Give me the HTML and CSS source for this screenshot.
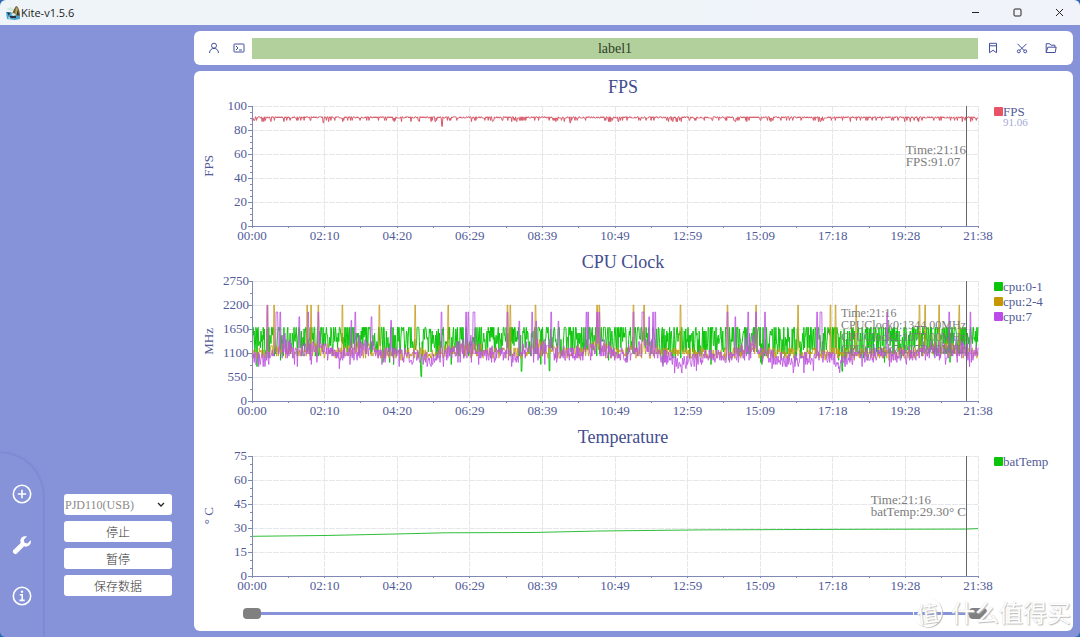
FILE: index.html
```html
<!DOCTYPE html>
<html lang="zh-CN">
<head>
<meta charset="utf-8">
<title>Kite-v1.5.6</title>
<link rel="stylesheet" href="styles.css">
</head>
<body>
<div class="window">
  <header class="titlebar">
    <svg class="app-icon" width="16" height="16" viewBox="0 0 16 16" aria-hidden="true">
      <path d="M1 4l5-2 3 3-3 1z" fill="#cfeadd"/>
      <path d="M7 11c0-4 2-7 4-10 2 0 4 4 4 11z" fill="#6f6438"/>
      <path d="M11 2l2 2-1 5-2 1z" fill="#b9a25a"/>
      <path d="M1 7h5l3 3 6 1v3l-5 1-8-1z" fill="#4aa3cc"/>
      <path d="M2 7l3 1-1 3zM5 11h6v2H5zM12 5l2 5h-2z" fill="#26323c"/>
      <path d="M6 9l3-1 2 2-3 1zM3 12l3 1-2 1z" fill="#e4eaec"/>
    </svg>
    <h1 class="app-name">Kite-v1.5.6</h1>
    <div class="window-buttons">
      <button class="window-button" aria-label="最小化"><svg width="9" height="9" viewBox="0 0 9 9"><path d="M1 4.500h7"/></svg></button>
      <button class="window-button" aria-label="最大化"><svg width="9" height="9" viewBox="0 0 9 9"><rect x="1" y="1" width="7" height="7" rx="1"/></svg></button>
      <button class="window-button" aria-label="关闭"><svg width="9" height="9" viewBox="0 0 9 9"><path d="M1 1l7 7M8 1l-7 7"/></svg></button>
    </div>
  </header>

  <div class="workspace">
    <aside class="sidebar">
      <nav class="rail">
        <button class="rail-button" aria-label="添加"><svg width="20" height="20" viewBox="0 0 20 20"><g fill="none" stroke="#fff" stroke-width="1.6"><circle cx="10" cy="10" r="8.700"/><path d="M10 5.800v8.400M5.800 10h8.400"/></g></svg></button>
        <button class="rail-button" aria-label="工具"><svg width="20" height="20" viewBox="0 0 20 20"><path fill="#fff" d="M18.700 5.200l-3.300 3.200-2.900-.7-.7-2.900 3.200-3.300c-2.200-.7-4.500-.1-5.700 1.500-1.100 1.500-1.200 3.300-.6 4.900L1.400 15.100c-.8.8-.8 2 0 2.800l.7.7c.8.8 2 .8 2.800 0l7.200-7.300c1.600.6 3.500.4 4.900-.7 1.600-1.300 2.300-3.400 1.700-5.400z"/></svg></button>
        <button class="rail-button" aria-label="信息"><svg width="20" height="20" viewBox="0 0 20 20"><g fill="none" stroke="#fff" stroke-width="1.600"><circle cx="10" cy="10" r="8.700"/><path d="M7.800 8.800h2.400v5.600M7.500 14.400h5.200"/></g><circle cx="10" cy="5.800" r="1.200" fill="#fff"/></svg></button>
      </nav>
      <div class="controls">
        <select class="control device" aria-label="设备"><option>PJD110(USB)</option></select>
        <button class="control">停止</button>
        <button class="control">暂停</button>
        <button class="control">保存数据</button>
      </div>
    </aside>

    <main class="content">
      <div class="toolbar">
        <button class="tool" aria-label="用户"><svg width="12" height="12" viewBox="0 0 12 12"><circle cx="6" cy="3.700" r="2.500"/><path d="M1.500 11c.2-3 2-4.600 4.500-4.600s4.300 1.600 4.500 4.600"/></svg></button>
        <button class="tool" aria-label="终端"><svg width="12" height="12" viewBox="0 0 12 12"><rect x="1" y="2" width="10" height="8" rx=".5"/><path d="M3 4l2 2-2 2M6 8h3"/></svg></button>
        <div class="scene">label1</div>
        <div class="tool-group">
          <button class="tool" aria-label="书签"><svg width="12" height="12" viewBox="0 0 12 12"><path d="M2.500 1.300h7v9.400L6 8.300l-3.500 2.400zM2.500 3.800h7"/></svg></button>
          <button class="tool" aria-label="剪切"><svg width="12" height="12" viewBox="0 0 12 12"><path d="M1.500 1.800l6.700 6.700M10.500 1.800L3.800 8.500"/><circle cx="2.800" cy="9.300" r="1.500"/><circle cx="9.200" cy="9.300" r="1.500"/></svg></button>
          <button class="tool" aria-label="打开文件夹"><svg width="12" height="12" viewBox="0 0 12 12"><path d="M1.200 10.500V1.700h3.500l1.200 1.500h4v2M1.200 10.500l1.600-5.300h8.400l-1 5.300z"/></svg></button>
        </div>
      </div>

      <div class="panel">
        <section class="chart" data-chart="fps">
          <h2 class="chart-title">FPS</h2>
          <div class="unit"><span>FPS</span></div>
          <div class="y-axis"></div>
          <div class="plot">
            <svg class="canvas" viewBox="0 0 726 120" preserveAspectRatio="none"></svg>
            <div class="cursor"></div>
            <div class="readout">Time:21:16<br>FPS:91.07</div>
          </div>
          <ul class="legend">
            <li><i class="swatch red"></i>FPS</li>
            <li class="average">91.06</li>
          </ul>
          <div class="x-axis"></div>
        </section>

        <section class="chart" data-chart="cpu">
          <h2 class="chart-title">CPU Clock</h2>
          <div class="unit"><span>MHz</span></div>
          <div class="y-axis"></div>
          <div class="plot">
            <svg class="canvas" viewBox="0 0 726 120" preserveAspectRatio="none"></svg>
            <div class="cursor"></div>
            <div class="readout dense">Time:21:16<br>CPUClock0:1344.00MHz<br>CPUClock2:1077.00MHz<br>CPUClock7:1075.00MHz</div>
          </div>
          <ul class="legend spaced">
            <li><i class="swatch green"></i>cpu:0-1</li>
            <li><i class="swatch gold"></i>cpu:2-4</li>
            <li><i class="swatch purple"></i>cpu:7</li>
          </ul>
          <div class="x-axis"></div>
        </section>

        <section class="chart" data-chart="temp">
          <h2 class="chart-title">Temperature</h2>
          <div class="unit"><span>° C</span></div>
          <div class="y-axis"></div>
          <div class="plot">
            <svg class="canvas" viewBox="0 0 726 120" preserveAspectRatio="none"></svg>
            <div class="cursor"></div>
            <div class="readout">Time:21:16<br>batTemp:29.30° C</div>
          </div>
          <ul class="legend">
            <li><i class="swatch green"></i>batTemp</li>
          </ul>
          <div class="x-axis"></div>
        </section>

        <div class="range">
          <input type="range" class="range-input" aria-label="开始时间" min="0" max="100" value="0">
          <input type="range" class="range-input" aria-label="结束时间" min="0" max="100" value="100">
        </div>
        <div class="watermark"><span class="watermark-badge">值</span><span>什么值得买</span></div>
      </div>
    </main>
  </div>
</div>
<script src="charts.js"></script>
</body>
</html>
```
FILE: styles.css
```css
* { box-sizing: border-box; }

body {
  margin: 0;
  background: #2a6db0;
  color: #525b98;
  font: 13px/12px "Liberation Serif", "Noto Sans CJK SC", serif;
}

h1, h2, ul { margin: 0; padding: 0; font-weight: normal; }
ul { list-style: none; }
button { border: 0; padding: 0; background: none; font: inherit; color: inherit; }

.window {
  display: flex;
  flex-direction: column;
  min-height: 100vh;
  overflow: hidden;
  border-radius: 6px;
  background: #8693d9;
}

.titlebar {
  display: flex;
  align-items: center;
  height: 25px;
  padding-left: 5px;
  background: linear-gradient(90deg, #eef4f8, #f0f4fa);
  color: #1c1c1c;
}
.app-name { font: 11px/16px "Open Sans", sans-serif; }
.window-buttons { display: flex; margin-left: auto; }
.window-button { display: grid; place-items: center; width: 42px; height: 25px; }
.window-button svg { fill: none; stroke: #222; stroke-width: 1; }

.workspace { display: flex; flex: 1; }

.sidebar { display: flex; align-items: flex-end; gap: 21px; width: 194px; flex: none; }
.rail {
  display: flex;
  flex-direction: column;
  align-items: center;
  gap: 31px;
  width: 43px;
  padding: 31px 0;
  border-radius: 0 43px 0 0;
  background: #8693d9;
  box-shadow: 0 0 3px #6a77be;
}
.rail-button { display: block; height: 20px; }
.rail-button svg { display: block; }
.controls { display: flex; flex-direction: column; gap: 6px; width: 108px; padding-bottom: 41px; }
.control {
  height: 21px;
  border: 0;
  border-radius: 3px;
  background: #fff;
  color: #333;
  font: 300 12px/20px "Noto Sans CJK SC", sans-serif;
  text-align: center;
}
.device {
  appearance: none;
  padding: 0 1px;
  color: #8a8a8a;
  font: 12px/20px "Liberation Serif", serif;
  text-align: left;
  background: #fff url("data:image/svg+xml,%3Csvg xmlns='http://www.w3.org/2000/svg' width='8' height='6' fill='none' stroke='%23222' stroke-width='1.300'%3E%3Cpath d='M1 1l3 3 3-3'/%3E%3C/svg%3E") no-repeat right 7px center;
}

.content { display: flex; flex-direction: column; flex: 1; gap: 6px; min-width: 0; padding: 6px 7px 6px 0; }

.toolbar { display: flex; align-items: center; height: 34px; padding: 0 16px 0 14px; border-radius: 6px; background: #fff; }
.tool { display: grid; place-items: center; width: 12px; height: 12px; margin-right: 13px; }
.tool + .scene { margin-left: -6px; }
.tool svg { fill: none; stroke: #454f9e; stroke-width: 1; }
.scene { flex: 1; height: 21px; background: #b2d09b; color: #30402a; font-size: 14px; line-height: 21px; text-align: center; }
.tool-group { display: flex; justify-content: space-between; width: 79px; padding-left: 9px; }
.tool-group .tool { margin-right: 0; }

.panel { position: relative; flex: 1; border-radius: 6px; background: #fff; }

.chart {
  display: grid;
  grid-template-columns: 29px 29px 1fr 95px;
  grid-template-rows: 35px 120px 20px;
  grid-template-areas: ". . title ." "unit y plot legend" ". . x .";
}
.chart-title { grid-area: title; padding-left: 16px; color: #434d8e; font-size: 18px; line-height: 32px; text-align: center; }
.unit { grid-area: unit; display: grid; place-items: center; }
.unit span { writing-mode: vertical-rl; transform: rotate(180deg); line-height: 14px; }
.y-axis {
  grid-area: y;
  display: flex;
  flex-direction: column;
  justify-content: space-between;
  margin: -6px 0;
  padding-right: 5px;
  text-align: right;
}
.plot { grid-area: plot; position: relative; }
.canvas { display: block; width: 100%; height: 100%; overflow: visible; }
.canvas path { fill: none; vector-effect: non-scaling-stroke; }
.grid-line { stroke: #e5e7ea; stroke-dasharray: 6 1; shape-rendering: crispEdges; }
.axis-line { stroke: #8089b4; shape-rendering: crispEdges; }
.x-axis { grid-area: x; display: flex; justify-content: space-between; margin: 0 -20px; padding-top: 4px; }
.x-axis span { width: 40px; text-align: center; }

.cursor { position: absolute; top: 0; bottom: 0; right: 11px; width: 1px; background: #666; }
.readout { position: absolute; top: 38px; right: 12px; color: #7c7c7c; white-space: nowrap; }
.readout.dense { top: 26px; font-size: 12px; }

.legend { grid-area: legend; padding-left: 16px; line-height: 11px; }
.legend li { display: flex; align-items: center; }
.legend.spaced li { margin-bottom: 4px; }
.legend .average { padding-left: 9px; color: #a4aad6; font-size: 11px; }
.swatch { width: 9px; height: 9px; border-radius: 1px; }
.red { background: #e85365; }
.green { background: #0bc50b; }
.gold { background: #c69700; }
.purple { background: #bd4bea; }

.range { position: relative; height: 35px; margin: 0 86px 0 49px; }
.range::before { content: ""; position: absolute; top: 16px; left: 9px; right: 9px; height: 3px; background: #8693d9; }
.range-input { position: absolute; inset: 0; width: 100%; height: 35px; margin: 0; appearance: none; background: none; pointer-events: none; }
.range-input::-webkit-slider-thumb { appearance: none; width: 18px; height: 11px; border-radius: 4px; background: #808080; pointer-events: auto; }

.watermark {
  position: absolute;
  right: 2px;
  bottom: 3px;
  display: flex;
  align-items: center;
  gap: 9px;
  color: #fff;
  font: 24px/32px "Noto Sans CJK SC", sans-serif;
  text-shadow: 1px 1px 1px #bbb, 0 0 1px #ccc;
}
.watermark-badge {
  width: 29px;
  height: 29px;
  border: 1px solid #fff;
  border-radius: 50%;
  box-shadow: 1px 1px 1px #bbb;
  font-size: 22px;
  line-height: 26px;
  text-align: center;
  transform: rotate(-8deg);
}
```
FILE: charts.js
```js
const WIDTH = 726, HEIGHT = 120, SAMPLES = 1298;
const TIMES = ["00:00", "02:10", "04:20", "06:29", "08:39", "10:49", "12:59", "15:09", "17:18", "19:28", "21:38"];

let seed = 4711;
function random() {
  seed = (seed * 1664525 + 1013904223) % 4294967296;
  return seed / 4294967296;
}

function series(valueAt) {
  return Array.from({ length: SAMPLES }, (_, i) => {
    const x = i * WIDTH / (SAMPLES - 1);
    return [x, valueAt(x, i)];
  });
}

// Short boosts of the clock: [position, peak]
function addSpikes(points, spikes) {
  for (const [x, peak] of spikes) {
    const i = Math.round(x / WIDTH * (SAMPLES - 1));
    points[i][1] = peak;
    if (points[i + 1]) points[i + 1][1] = peak;
  }
  return points;
}

const quiet = [[12, 8], [178, 9], [428, 20], [540, 20], [588, 9]];
const busy = [[30, 12], [65, 14], [110, 14], [215, 20], [290, 18], [345, 14], [395, 16], [500, 12], [690, 24]];
const bump = (x, list) => list.reduce((s, [c, w]) => s + Math.exp(-(((x - c) / w) ** 2)), 0);
const step = (v) => Math.round(v / 48) * 48 + 20;

const fps = series(() => {
  const r = random();
  return r < 0.03 ? 87 : r < 0.12 ? 88 : r < 0.6 ? 90 : 91;
});
addSpikes(fps, [[190, 83], [71, 86], [366, 87], [568, 87], [318, 86]]);

const low = series((x) => Math.min(1690, step(1000 + random() * 880 - bump(x, quiet) * 80 - (random() < 0.06 ? 200 : 0))));
addSpikes(low, [[169, 560], [269, 680], [297, 690], [590, 680]]);

const mid = series((x) => step(930 + random() * 280 + bump(x, busy) * 200 * random()));
addSpikes(mid, [15, 22, 55, 59, 66, 90, 127, 163, 196, 255, 258, 283, 345, 347, 381, 392, 428, 475, 504, 546, 578, 583, 604, 667, 673, 687, 707].map((x) => [x, 2200]));

const high = series((x) => {
  const dip = random() < 0.12 ? 150 : 0;
  return Math.max(640, step(860 + random() * 350 - dip - bump(x, quiet) * 150 + bump(x, busy) * (40 + 480 * random() * random())));
});
addSpikes(high, [[15, 2190], [47, 1930], [99, 1850], [119, 1930], [139, 1850], [267, 1830], [284, 1830], [306, 1830], [397, 1930], [483, 1930],
  ...[24, 25, 28, 56, 66, 103, 189, 214, 216, 221, 222, 255, 280, 299, 334, 336, 345, 347, 381, 390, 391, 401, 403, 475, 496, 504, 513, 565, 568, 569, 635, 697, 718].map((x) => [x, 2040])]);

const temperature = [[0, 24.800], [73, 25.300], [148, 26.300], [193, 27], [280, 27.200], [348, 28.100], [448, 28.800], [608, 29.200], [714, 29.300], [726, 29.600]];

const CHARTS = {
  fps: { max: 100, step: 20, minor: 4, lines: [[fps, "#d85b6a", 1]] },
  cpu: { max: 2750, step: 550, minor: 2, lines: [[low, "#0bc50b", 1], [mid, "#c69a14", 0.800], [high, "#bd55e0", 0.850]] },
  temp: { max: 75, step: 15, minor: 3, lines: [[temperature, "#2fbf38", 1]] }
};

function path(d, attributes) {
  const names = Object.entries(attributes).map(([k, v]) => `${k}="${v}"`).join(" ");
  return `<path d="${d}" ${names}/>`;
}

for (const section of document.querySelectorAll(".chart")) {
  const chart = CHARTS[section.dataset.chart];
  const rows = chart.max / chart.step;
  const yOf = (v) => HEIGHT * (1 - v / chart.max);
  let grid = "", axis = `M0 0V${HEIGHT}H${WIDTH}`;

  for (let r = 0; r < rows; r++) {
    const y = yOf(chart.max - r * chart.step);
    grid += `M0 ${y}H${WIDTH}`;
    for (let m = 0; m < chart.minor; m++) {
      axis += `M0 ${y + m * HEIGHT / rows / chart.minor}h${m ? -2 : -4}`;
    }
  }
  axis += `M0 ${HEIGHT}h-4`;
  for (let c = 0; c <= 20; c++) {
    const x = c * WIDTH / 20;
    if (c && c % 2 === 0) grid += `M${x} 0V${HEIGHT}`;
    axis += `M${x} ${HEIGHT}v2`;
  }

  const lines = chart.lines.map(([points, color, opacity]) =>
    path("M" + points.map(([x, v]) => `${x.toFixed(1)} ${yOf(v).toFixed(1)}`).join("L"), { stroke: color, "stroke-opacity": opacity, "stroke-linejoin": "bevel" }));
  section.querySelector(".canvas").innerHTML = path(grid, { class: "grid-line" }) + lines.join("") + path(axis, { class: "axis-line" });

  section.querySelector(".y-axis").innerHTML =
    Array.from({ length: rows + 1 }, (_, r) => `<span>${chart.max - r * chart.step}</span>`).join("");
  section.querySelector(".x-axis").innerHTML = TIMES.map((t) => `<span>${t}</span>`).join("");
}
```
